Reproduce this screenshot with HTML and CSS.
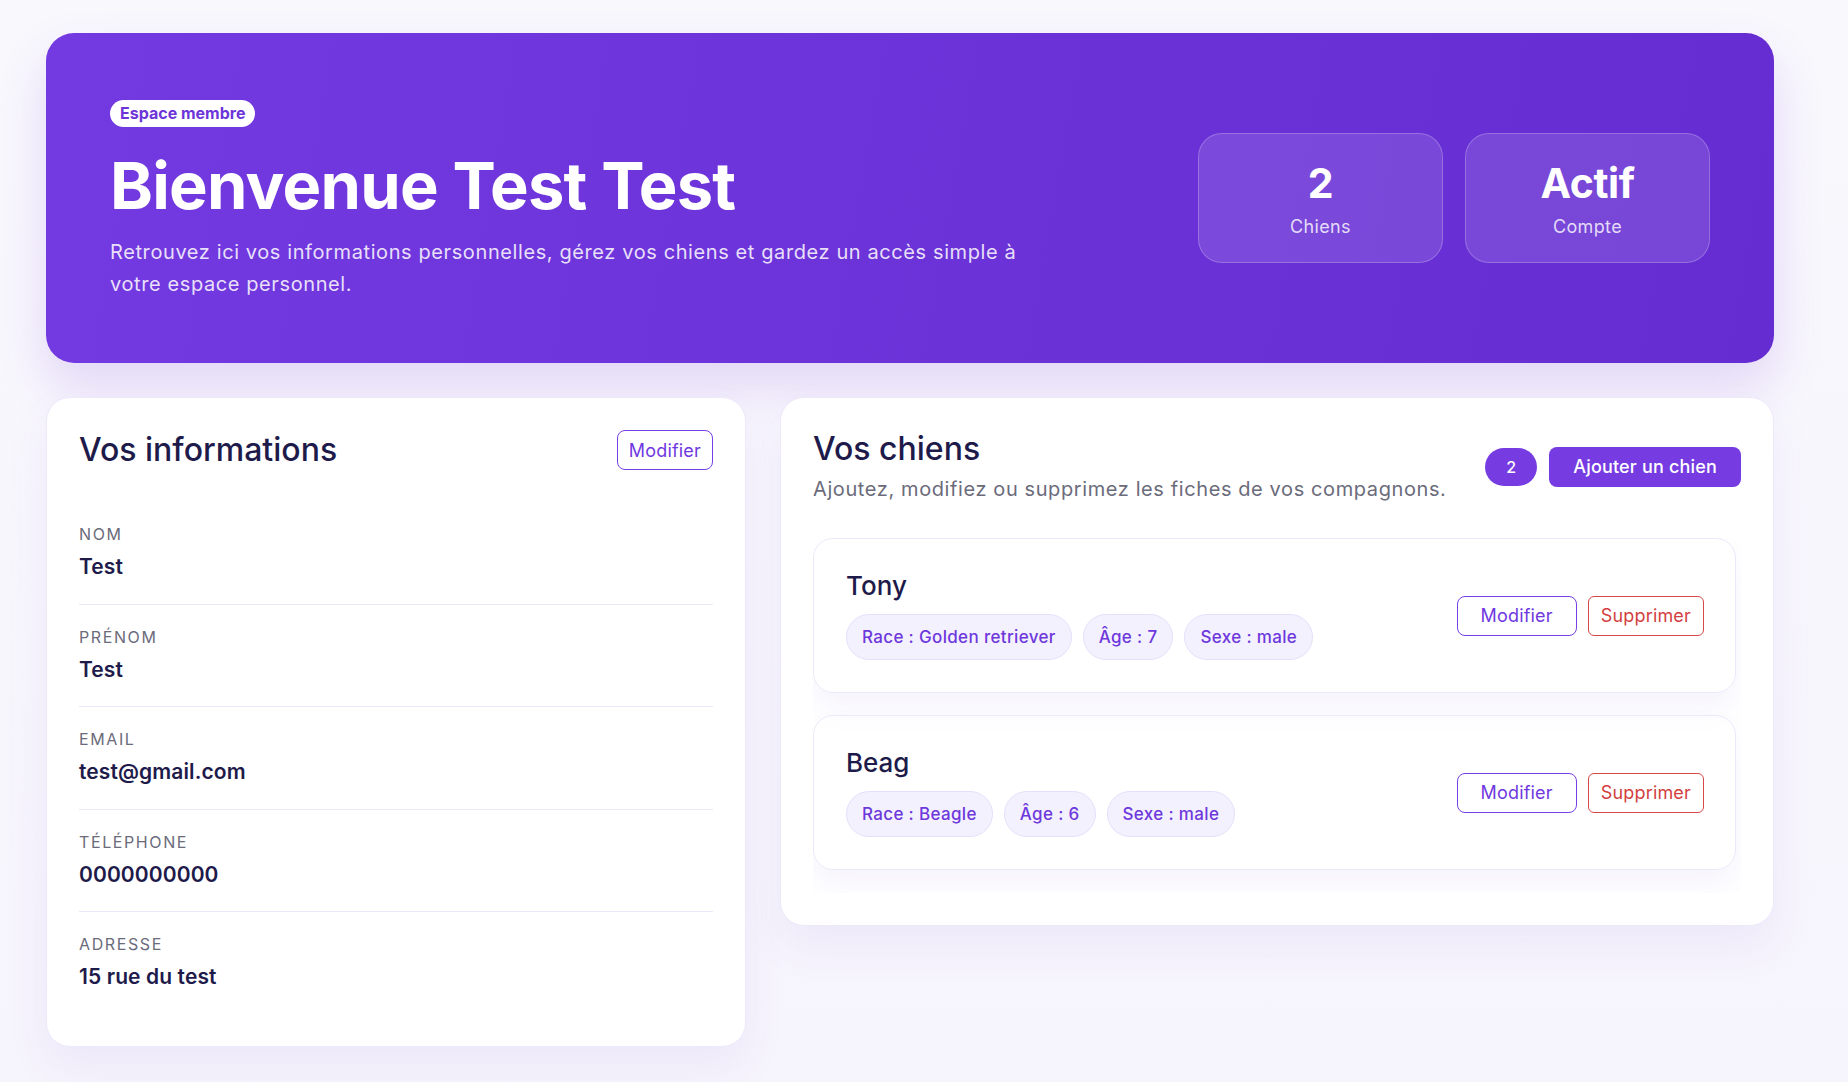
FILE: index.html
```html
<!DOCTYPE html>
<html lang="fr">
<head>
    <meta charset="UTF-8">
    <meta name="viewport" content="width=device-width, initial-scale=1.0">
    <title>Espace membre</title>
    <link rel="stylesheet" href="styles.css">
</head>
<body>
    <main class="page">
        <!-- Bandeau d'accueil -->
        <section class="hero">
            <div class="hero-text">
                <span class="hero-badge">Espace membre</span>
                <h1>Bienvenue Test Test</h1>
                <p>Retrouvez ici vos informations personnelles, gérez vos chiens et gardez un accès simple à votre espace personnel.</p>
            </div>
            <div class="hero-stats">
                <div class="stat">
                    <strong>2</strong>
                    <span>Chiens</span>
                </div>
                <div class="stat">
                    <strong>Actif</strong>
                    <span>Compte</span>
                </div>
            </div>
        </section>

        <div class="columns">
            <!-- Infos du compte -->
            <section class="card">
                <div class="card-head">
                    <h2>Vos informations</h2>
                    <button class="btn-outline small">Modifier</button>
                </div>
                <div class="field">
                    <span class="field-label">Nom</span>
                    <span class="field-value">Test</span>
                </div>
                <div class="field">
                    <span class="field-label">Prénom</span>
                    <span class="field-value">Test</span>
                </div>
                <div class="field">
                    <span class="field-label">Email</span>
                    <span class="field-value">test@gmail.com</span>
                </div>
                <div class="field">
                    <span class="field-label">Téléphone</span>
                    <span class="field-value">0000000000</span>
                </div>
                <div class="field">
                    <span class="field-label">Adresse</span>
                    <span class="field-value">15 rue du test</span>
                </div>
            </section>

            <!-- Liste des chiens -->
            <section class="card">
                <div class="card-head dogs-head">
                    <div>
                        <h2>Vos chiens</h2>
                        <p class="card-sub">Ajoutez, modifiez ou supprimez les fiches de vos compagnons.</p>
                    </div>
                    <div class="head-actions">
                        <span class="count">2</span>
                        <button class="btn-primary">Ajouter un chien</button>
                    </div>
                </div>

                <div class="dog-list">
                    <div class="dog">
                        <div>
                            <h3>Tony</h3>
                            <div class="tags">
                                <span class="tag">Race : Golden retriever</span>
                                <span class="tag">Âge : 7</span>
                                <span class="tag">Sexe : male</span>
                            </div>
                        </div>
                        <div class="dog-actions">
                            <button class="btn-outline">Modifier</button>
                            <button class="btn-danger">Supprimer</button>
                        </div>
                    </div>
                    <div class="dog">
                        <div>
                            <h3>Beag</h3>
                            <div class="tags">
                                <span class="tag">Race : Beagle</span>
                                <span class="tag">Âge : 6</span>
                                <span class="tag">Sexe : male</span>
                            </div>
                        </div>
                        <div class="dog-actions">
                            <button class="btn-outline">Modifier</button>
                            <button class="btn-danger">Supprimer</button>
                        </div>
                    </div>
                </div>
            </section>
        </div>
    </main>
</body>
</html>
```

FILE: styles.css
```css
body {
    margin: 0;
    font-family: Inter, "Noto Sans", sans-serif;
    background: linear-gradient(180deg, #f9f8fd 0%, #f6f4fc 100%);
    color: #1e1b4b;
    min-height: 100vh;
}
.page {
    width: 1728px;
    padding: 33px 0 40px 46px;
}

/* Hero */
.hero {
    display: flex;
    align-items: center;
    justify-content: space-between;
    height: 330px;
    box-sizing: border-box;
    padding: 0 64px;
    border-radius: 28px;
    background: linear-gradient(100deg, #743ae1 0%, #6b32d8 55%, #652dd1 100%);
    box-shadow: 0 24px 50px rgba(109, 50, 216, 0.16);
    color: #ffffff;
}
.hero-text {
    display: flex;
    flex-direction: column;
    align-items: flex-start;
    margin-top: 4px;
}
.hero-badge {
    background: #ffffff;
    color: #6d35d8;
    font-size: 16px;
    font-weight: 700;
    line-height: 27px;
    padding: 0 10px;
    border-radius: 999px;
}
.hero h1 {
    margin: 24px 0 15px;
    font-size: 65px;
    line-height: 70px;
    font-weight: 700;
    letter-spacing: -0.012em;
}
.hero p {
    margin: 0;
    max-width: 930px;
    font-size: 20px;
    line-height: 32px;
    letter-spacing: 0.03em;
    color: rgba(255, 255, 255, 0.86);
}
.hero-stats {
    display: flex;
    gap: 22px;
}
.stat {
    width: 245px;
    height: 130px;
    box-sizing: border-box;
    display: flex;
    flex-direction: column;
    align-items: center;
    justify-content: center;
    gap: 10px;
    border-radius: 24px;
    background: rgba(255, 255, 255, 0.12);
    border: 1px solid rgba(255, 255, 255, 0.22);
}
.stat strong {
    font-size: 41px;
    line-height: 46px;
    font-weight: 700;
    letter-spacing: -0.01em;
}
.stat span {
    font-size: 18px;
    letter-spacing: 0.02em;
    color: rgba(255, 255, 255, 0.82);
}

/* Cards */
.columns {
    display: grid;
    grid-template-columns: 700px 994px;
    gap: 34px;
    margin-top: 34px;
    align-items: start;
}
.card {
    background: #ffffff;
    border: 1px solid #ede9fb;
    border-radius: 24px;
    padding: 32px;
    box-shadow: 0 20px 45px rgba(109, 70, 210, 0.07);
}
.card-head {
    display: flex;
    align-items: center;
    justify-content: space-between;
    margin-bottom: 32px;
}
.card h2 {
    margin: 0;
    font-size: 32px;
    line-height: 38px;
    font-weight: 500;
    color: #1e1b4b;
}
.card-sub {
    margin: 7px 0 0;
    font-size: 20px;
    line-height: 28px;
    letter-spacing: 0.03em;
    color: #6b6b7b;
}
.dogs-head {
    margin-bottom: 35px;
}
.head-actions {
    display: flex;
    align-items: center;
    gap: 12px;
}
.count {
    width: 52px;
    height: 38px;
    border-radius: 999px;
    background: #763ce2;
    color: #ffffff;
    font-size: 16px;
    font-weight: 500;
    display: flex;
    align-items: center;
    justify-content: center;
}

/* Fields */
.field {
    display: flex;
    flex-direction: column;
    gap: 7px;
    padding: 22px 0 22.5px;
    border-bottom: 1px solid #ece8fa;
}
.field:last-child {
    border-bottom: none;
}
.field-label {
    font-size: 16px;
    line-height: 21px;
    text-transform: uppercase;
    letter-spacing: 0.1em;
    color: #6b6b7b;
}
.field-value {
    font-size: 21px;
    line-height: 29px;
    font-weight: 600;
    letter-spacing: 0.005em;
    color: #1e1b4b;
}

/* Buttons */
button {
    font-family: inherit;
    cursor: pointer;
    height: 40px;
    border-radius: 8px;
    font-size: 18px;
    letter-spacing: 0.01em;
    background: #ffffff;
}
.btn-outline {
    border: 1px solid #7640e6;
    color: #6f38e0;
    padding: 0 23px;
}
.btn-outline.small {
    padding: 0 11px;
}
.btn-danger {
    border: 1px solid #d94848;
    color: #d33f3f;
    padding: 0 12px;
    border-radius: 6px;
}
.btn-primary {
    background: #763ce2;
    color: #ffffff;
    border: none;
    padding: 0 24px;
    font-weight: 500;
}

/* Dogs */
.dog-list {
    display: flex;
    flex-direction: column;
    gap: 22px;
    padding: 0 5px 23px 0;
    overflow: hidden;
}
.dog {
    display: flex;
    align-items: center;
    justify-content: space-between;
    padding: 32px 31px 32px 32px;
    border: 1px solid #ece8fa;
    border-radius: 20px;
    box-shadow: 0 16px 30px rgba(109, 70, 210, 0.06);
}
.dog h3 {
    margin: 0 0 13px;
    font-size: 26px;
    line-height: 30px;
    font-weight: 500;
    color: #1e1b4b;
}
.tags {
    display: flex;
    gap: 11px;
}
.tag {
    display: inline-flex;
    align-items: center;
    height: 46px;
    box-sizing: border-box;
    padding: 0 15px;
    border-radius: 999px;
    background: #f4f1fe;
    border: 1px solid #e6dffb;
    color: #6d38dc;
    font-size: 17px;
    letter-spacing: 0.02em;
    font-weight: 500;
}
.dog-actions {
    display: flex;
    gap: 11px;
}
```
